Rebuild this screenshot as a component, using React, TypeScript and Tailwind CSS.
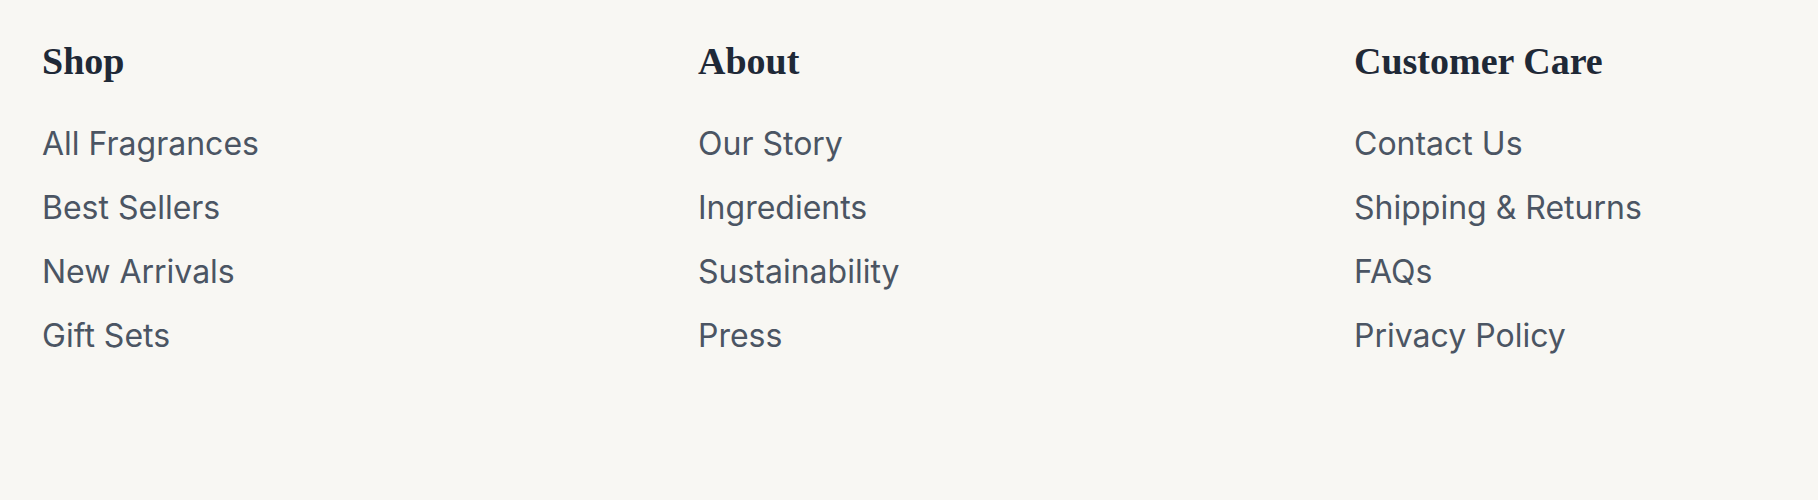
import React from "react";

export default function App() {
  const columns = [
    {
      title: "Shop",
      links: ["All Fragrances", "Best Sellers", "New Arrivals", "Gift Sets"]
    },
    {
      title: "About",
      links: ["Our Story", "Ingredients", "Sustainability", "Press"]
    },
    {
      title: "Customer Care",
      links: ["Contact Us", "Shipping & Returns", "FAQs", "Privacy Policy"]
    }
  ];

  return (
    <footer className="w-full h-[500px] bg-[#f8f7f3] px-[42px] pt-[37px]">
      <div className="grid grid-cols-3 gap-x-[234px]">
        {columns.map((col) => (
          <div key={col.title} className="flex flex-col">
            {/* Column heading */}
            <h3 className="font-['Liberation_Serif',serif] font-bold text-[38px] leading-[48px] text-[#1f2937]">
              {col.title}
            </h3>
            <ul className="flex flex-col gap-[16px] mt-[35px]">
              {col.links.map((link) => (
                <li key={link}>
                  <a
                    href="#"
                    className="font-['Inter',sans-serif] text-[32px] leading-[48px] text-[#4b5563] hover:text-[#1f2937]"
                  >
                    {link}
                  </a>
                </li>
              ))}
            </ul>
          </div>
        ))}
      </div>
    </footer>
  );
}
